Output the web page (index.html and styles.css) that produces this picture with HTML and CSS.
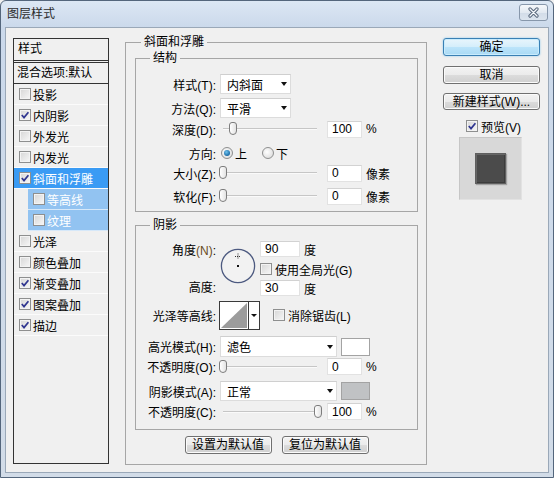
FILE: index.html
```html
<!DOCTYPE html>
<html lang="zh-CN">
<head>
  <meta charset="UTF-8">
  <title>图层样式</title>
  <link rel="stylesheet" href="styles.css">
</head>
<body>

<div class="window">
  <div class="titlebar">
    <span class="title">图层样式</span>
    <button class="close">
      <svg width="13" height="11" viewBox="0 0 13 11">
        <path d="M3 2 L10 9 M10 2 L3 9" stroke="#56667a" stroke-width="3.2" stroke-linecap="round"/>
        <path d="M3 2 L10 9 M10 2 L3 9" stroke="#f4f7fb" stroke-width="1.3" stroke-linecap="round"/>
      </svg>
    </button>
  </div>

  <div class="client">
    <!-- left: style list -->
    <div class="styles-list">
      <div class="list-head">样式</div>
      <div class="list-blend">混合选项:默认</div>
      <div class="item"><span class="cb"></span>投影</div>
      <div class="item"><span class="cb"><svg viewBox="0 0 10 10"><path d="M1.8 5 L4 7.6 L8.4 2.2"/></svg></span>内阴影</div>
      <div class="item"><span class="cb"></span>外发光</div>
      <div class="item"><span class="cb"></span>内发光</div>
      <div class="item selected"><span class="cb"><svg viewBox="0 0 10 10"><path d="M1.8 5 L4 7.6 L8.4 2.2"/></svg></span>斜面和浮雕</div>
      <div class="item sub"><span class="cb"></span>等高线</div>
      <div class="item sub"><span class="cb"></span>纹理</div>
      <div class="item"><span class="cb"></span>光泽</div>
      <div class="item"><span class="cb"></span>颜色叠加</div>
      <div class="item"><span class="cb"><svg viewBox="0 0 10 10"><path d="M1.8 5 L4 7.6 L8.4 2.2"/></svg></span>渐变叠加</div>
      <div class="item"><span class="cb"><svg viewBox="0 0 10 10"><path d="M1.8 5 L4 7.6 L8.4 2.2"/></svg></span>图案叠加</div>
      <div class="item"><span class="cb"><svg viewBox="0 0 10 10"><path d="M1.8 5 L4 7.6 L8.4 2.2"/></svg></span>描边</div>
    </div>

    <!-- middle: bevel & emboss -->
    <fieldset class="group main-group">
      <legend>斜面和浮雕</legend>

      <fieldset class="group structure">
        <legend>结构</legend>
        <div class="row h20">
          <span class="lbl">样式(T):</span>
          <div class="select w71">内斜面<span class="arrow"></span></div>
        </div>
        <div class="row h20 mt4">
          <span class="lbl">方法(Q):</span>
          <div class="select w71">平滑<span class="arrow"></span></div>
        </div>
        <div class="row h18 mt2">
          <span class="lbl">深度(D):</span>
          <div class="slider"><span class="track"></span><span class="thumb" style="left:9px"></span></div>
          <input class="num" type="text" value="100">
          <span class="unit">%</span>
        </div>
        <div class="row h18 mt6">
          <span class="lbl">方向:</span>
          <span class="radio on"></span><span class="rtext">上</span>
          <span class="radio second"></span><span class="rtext">下</span>
        </div>
        <div class="row h18 mt2">
          <span class="lbl">大小(Z):</span>
          <div class="slider"><span class="track"></span><span class="thumb" style="left:-1px"></span></div>
          <input class="num" type="text" value="0">
          <span class="unit">像素</span>
        </div>
        <div class="row h18 mt5">
          <span class="lbl">软化(F):</span>
          <div class="slider"><span class="track"></span><span class="thumb" style="left:-1px"></span></div>
          <input class="num" type="text" value="0">
          <span class="unit">像素</span>
        </div>
      </fieldset>

      <fieldset class="group shading">
        <legend>阴影</legend>
        <div class="angle-grid">
          <span class="lbl ga">角度<span class="mn">(N)</span>:</span>
          <svg class="dial" width="36" height="36" viewBox="0 0 36 36">
            <circle cx="18" cy="18" r="16.6" fill="#f2f2f2" stroke="#4d5a80" stroke-width="1.3"/>
            <path d="M15 8.5 H21 M18 5.5 V11.5" stroke="#333" stroke-width="1" stroke-dasharray="1 1"/>
            <rect x="17" y="17" width="2" height="2" fill="#111"/>
          </svg>
          <div class="gr ga"><input class="num w40" type="text" value="90"><span class="unit">度</span></div>
          <div class="gr gb"><span class="cb"></span><span class="ctext">使用全局光(G)</span></div>
          <span class="lbl gc">高度:</span>
          <div class="gr gc"><input class="num w40" type="text" value="30"><span class="unit">度</span></div>
        </div>

        <div class="row h28 mt5">
          <span class="lbl">光泽等高线:</span>
          <svg class="contour" width="41" height="29" viewBox="0 0 41 29">
            <rect x="0.5" y="0.5" width="40" height="28" fill="#fff" stroke="#3a3a3a"/>
            <polygon points="2,27 28,2 28,27" fill="#9c9c9c"/>
            <path d="M29.5 1 V28" stroke="#3a3a3a"/>
            <polygon points="32,13 38,13 35,16" fill="#111"/>
          </svg>
          <span class="cb ml13"></span><span class="ctext">消除锯齿(L)</span>
        </div>
        <div class="row h21 mt7">
          <span class="lbl">高光模式(H):</span>
          <div class="select w117">滤色<span class="arrow"></span></div>
          <span class="swatch white"></span>
        </div>
        <div class="row h17 mt1">
          <span class="lbl">不透明度(O):</span>
          <div class="slider"><span class="track"></span><span class="thumb" style="left:-1px"></span></div>
          <input class="num" type="text" value="0">
          <span class="unit">%</span>
        </div>
        <div class="row h20 mt6">
          <span class="lbl">阴影模式(A):</span>
          <div class="select w117">正常<span class="arrow"></span></div>
          <span class="swatch grey"></span>
        </div>
        <div class="row h17 mt2">
          <span class="lbl">不透明度(C):</span>
          <div class="slider"><span class="track"></span><span class="thumb" style="left:94px"></span></div>
          <input class="num" type="text" value="100">
          <span class="unit">%</span>
        </div>
      </fieldset>

      <div class="defaults">
        <button class="btn">设置为默认值</button>
        <button class="btn">复位为默认值</button>
      </div>
    </fieldset>

    <!-- right: buttons and preview -->
    <div class="side">
      <button class="btn wide default">确定</button>
      <button class="btn wide cancel">取消</button>
      <button class="btn wide newstyle">新建样式(W)...</button>
      <div class="preview-check">
        <span class="cb"><svg viewBox="0 0 10 10"><path d="M1.8 5 L4 7.6 L8.4 2.2"/></svg></span><span class="ctext">预览(V)</span>
      </div>
      <div class="preview">
        <div class="preview-square"></div>
      </div>
    </div>
  </div>
</div>

</body>
</html>
```

FILE: styles.css
```css
* {
  box-sizing: border-box;
}

body {
  margin: 0;
  font-family: "Liberation Sans", "Noto Sans CJK SC", sans-serif;
  font-size: 12px;
  color: #000;
  background: #f0f0f0;
}

.window {
  width: 554px;
  height: 478px;
  border: 1px solid #54667c;
  border-radius: 6px 6px 0 0;
  background: linear-gradient(#dce7f4, #cbd9eb 26px, #d2dce8);
  display: flex;
  flex-direction: column;
}

.titlebar {
  height: 26px;
  flex-shrink: 0;
  display: flex;
  align-items: flex-start;
  padding: 0 5px 0 6px;
}

.title {
  color: #2b2b2b;
  line-height: 26px;
}

.close {
  margin-left: auto;
  margin-top: 3px;
  width: 29px;
  height: 17px;
  padding: 0;
  border: 1px solid #8797ab;
  border-radius: 3px;
  background: linear-gradient(#f5f8fb, #e2e9f1 50%, #d2dce8 51%, #dbe4ee);
  display: flex;
  align-items: center;
  justify-content: center;
}

.client {
  flex: 1;
  margin: 0 4px 4px;
  border: 1px solid #9aa8b8;
  background: #f0f0f0;
  display: flex;
  align-items: flex-start;
  gap: 16px;
  padding: 6px 0 0 7px;
}

/* ---------- style list ---------- */
.styles-list {
  width: 96px;
  height: 426px;
  margin-top: 4px;
  border: 1px solid #333;
  background: #f0f0f0;
  flex-shrink: 0;
}

.list-head {
  height: 22px;
  line-height: 21px;
  padding-left: 4px;
  border-bottom: 1px solid #333;
}

.list-blend {
  height: 22px;
  margin-top: 1px;
  line-height: 20px;
  padding-left: 3px;
  border-top: 1px solid #333;
  border-bottom: 1px solid #333;
  white-space: nowrap;
}

.item {
  height: 21px;
  display: flex;
  align-items: center;
  padding-left: 5px;
  border-bottom: 1px solid #fbfbfb;
  white-space: nowrap;
}

.item .cb {
  margin-right: 2px;
}

.item.selected {
  background: #3a9bf4;
  color: #fff;
}

.item.sub {
  margin-left: 14px;
  background: #92c3f1;
  color: #fff;
  border-bottom-color: #d6e8f9;
}

/* ---------- check boxes, radios ---------- */
.cb {
  width: 12px;
  height: 12px;
  flex-shrink: 0;
  border: 1px solid #8e8f8f;
  background: linear-gradient(135deg, #d6d6d6, #f7f7f7);
  box-shadow: inset 0 0 0 1px #f3f3f3;
  display: inline-flex;
  align-items: center;
  justify-content: center;
}

.cb svg {
  width: 10px;
  height: 10px;
}

.cb path {
  fill: none;
  stroke: #2f3590;
  stroke-width: 1.7;
}

.ctext {
  margin-left: 3px;
  white-space: nowrap;
}

.radio {
  width: 12px;
  height: 12px;
  margin-left: 1px;
  border-radius: 50%;
  border: 1px solid #8e8f8f;
  background: radial-gradient(circle at 40% 40%, #ffffff, #d5d5d5);
  display: inline-flex;
  align-items: center;
  justify-content: center;
}

.radio.on::after {
  content: "";
  width: 6px;
  height: 6px;
  border-radius: 50%;
  background: radial-gradient(circle at 40% 35%, #6fc3ef, #1a6ba6 70%);
}

.radio.second {
  margin-left: 15px;
}

.rtext {
  margin-left: 2px;
}

/* ---------- group boxes ---------- */
.group {
  margin: 0;
  min-width: 0;
  border: 1px solid #a6a6a6;
}

.group legend {
  line-height: 16px;
  padding: 0 3px;
}

.main-group {
  width: 302px;
  padding: 0 8px 10px 9px;
  flex-shrink: 0;
}

.main-group > legend {
  margin-left: 6px;
}

.structure,
.shading {
  width: 100%;
}

.structure > legend,
.shading > legend {
  margin-left: 14px;
}

.structure {
  padding: 8px 0 6px 0;
}

.shading {
  margin-top: 5px;
  padding: 8px 0 9px 0;
}

/* ---------- form rows ---------- */
.row {
  display: flex;
  align-items: center;
  white-space: nowrap;
}

.h17 { height: 17px; }
.h18 { height: 18px; }
.h20 { height: 20px; }
.h21 { height: 21px; }
.h28 { height: 28px; }
.mt1 { margin-top: 1px; }
.mt2 { margin-top: 2px; }
.mt4 { margin-top: 4px; }
.mt5 { margin-top: 5px; }
.mt6 { margin-top: 6px; }
.mt7 { margin-top: 7px; }
.ml13 { margin-left: 13px; }

.lbl {
  width: 80px;
  margin-right: 4px;
  text-align: right;
  flex-shrink: 0;
  white-space: nowrap;
}

.mn {
  color: #6a4c1e;
}

.select {
  height: 100%;
  display: flex;
  align-items: center;
  padding: 0 3px 0 6px;
  background: #fff;
  border: 1px solid #dcdcdc;
  border-top-color: #cfcfcf;
}

.w71 { width: 71px; }
.w117 { width: 117px; }

.arrow {
  margin-left: auto;
  width: 0;
  height: 0;
  border-left: 3.5px solid transparent;
  border-right: 3.5px solid transparent;
  border-top: 4px solid #111;
}

.slider {
  position: relative;
  width: 100px;
  height: 14px;
  flex-shrink: 0;
}

.slider .track {
  position: absolute;
  left: 3px;
  right: 3px;
  top: 6px;
  height: 2px;
  background: #c6c6c6;
  border-bottom: 1px solid #fafafa;
}

.slider .thumb {
  position: absolute;
  top: 0;
  width: 8px;
  height: 13px;
  border: 1px solid #7d7d7d;
  border-radius: 3px 3px 4px 4px;
  background: linear-gradient(90deg, #ffffff, #e3e3e3);
}

.num {
  width: 35px;
  height: 17px;
  margin: 0 0 0 7px;
  padding: 0 0 0 4px;
  font: inherit;
  color: #000;
  background: #fff;
  border: 1px solid #e2e2e2;
  border-top-color: #d2d2d2;
  outline: none;
}

.w40 {
  width: 40px;
  height: 16px;
  margin-left: 0;
}

.unit {
  margin-left: 4px;
}

/* ---------- angle block ---------- */
.angle-grid {
  display: grid;
  grid-template-columns: 84px 40px auto;
  grid-template-rows: 16px 20px 19px;
  white-space: nowrap;
}

.angle-grid .lbl {
  width: auto;
  margin-right: 4px;
  grid-column: 1;
}

.ga { grid-row: 1; align-self: center; }
.gb { grid-row: 2; align-self: end; }
.gc { grid-row: 3; align-self: end; }

.angle-grid .lbl.gc {
  line-height: 16px;
}

.dial {
  grid-column: 2;
  grid-row: 1 / 4;
  margin-top: 7px;
}

.gr {
  grid-column: 3;
  display: flex;
  align-items: center;
  height: 16px;
}

.contour {
  flex-shrink: 0;
  margin-left: -1px;
}

.swatch {
  width: 29px;
  height: 18px;
  margin-left: 4px;
  border: 1px solid #a3a3a3;
}

.swatch.white { background: #fff; }
.swatch.grey { background: #c0c2c4; }

/* ---------- buttons ---------- */
.btn {
  height: 18px;
  padding: 0;
  font: inherit;
  color: #000;
  line-height: 16px;
  border: 1px solid #707070;
  border-radius: 3px;
  background: linear-gradient(#f3f3f3, #ebebeb 50%, #dcdcdc 51%, #d0d0d0);
  box-shadow: inset 0 0 0 1px #fbfbfb;
  white-space: nowrap;
}

.defaults {
  margin-top: 6px;
  display: flex;
  justify-content: center;
  gap: 10px;
}

.defaults .btn {
  width: 87px;
}

.side {
  width: 97px;
  margin-top: 4px;
  display: flex;
  flex-direction: column;
  align-items: center;
  flex-shrink: 0;
}

.btn.wide {
  width: 97px;
}

.btn.default {
  border-color: #3a80b4;
  background: linear-gradient(#e8f5fc, #d4eefb 50%, #bce4fa 51%, #a9daf5);
  box-shadow: inset 0 0 0 1px #c9ecfd, 0 0 2px #7ec3ec;
}

.btn.cancel {
  margin-top: 10px;
}

.btn.newstyle {
  margin-top: 9px;
  height: 17px;
}

.preview-check {
  margin-top: 8px;
  height: 16px;
  display: flex;
  align-items: center;
  padding-left: 4px;
}

.preview {
  width: 63px;
  height: 63px;
  margin-top: 3px;
  margin-left: -2px;
  background: #d8d8d8;
  border: 1px solid #c6c6c6;
  border-right-color: #e2e2e2;
  border-bottom-color: #e2e2e2;
  display: flex;
  align-items: center;
  justify-content: center;
}

.preview-square {
  width: 31px;
  height: 31px;
  background: #4b4b4b;
  border: 1px solid #5f5f5f;
  box-shadow: inset 1px 1px 0 #666, inset -1px -1px 0 #3c3c3c, 1px 1px 1px rgba(0, 0, 0, 0.25);
}
```
